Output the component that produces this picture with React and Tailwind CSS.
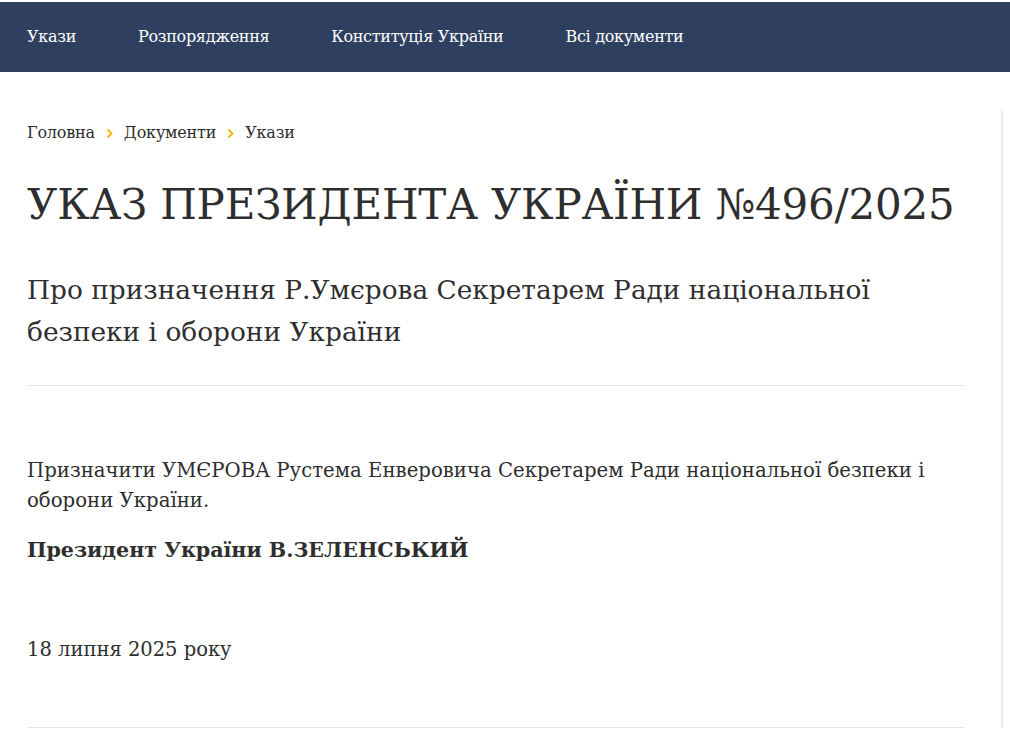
import React from "react";

function Chevron() {
    return (
        <svg className="mx-[11px]" width="7" height="11" viewBox="0 0 7 11" fill="none">
            <polyline points="1.5,1.5 5.5,5.5 1.5,9.5" stroke="#f5b400" strokeWidth="1.8" />
        </svg>
    );
}

export default function App() {
    const nav = ["Укази", "Розпорядження", "Конституція України", "Всі документи"];
    return (
        <div className="min-h-[731px] bg-white text-[#2e2e2e] font-['DejaVu_Serif',serif]">
            <div className="pt-[2px]">
                <nav className="h-[70px] bg-[#2f3f5f] flex items-center pl-[27px] gap-[62px]">
                    {nav.map((n) => (
                        <a key={n} className="text-white text-[16px] tracking-[-0.3px]">{n}</a>
                    ))}
                </nav>
            </div>
            <div className="flex">
                <main className="w-[965px] shrink-0 pl-[27px] pt-[49px]">
                    <div className="flex items-center text-[16px] leading-[24px] tracking-[-0.2px]">
                        <span>Головна</span>
                        <Chevron />
                        <span>Документи</span>
                        <Chevron />
                        <span>Укази</span>
                    </div>
                    <h1 className="text-[42px] leading-[56px] mt-[32px] tracking-[-0.2px] whitespace-nowrap">
                        УКАЗ ПРЕЗИДЕНТА УКРАЇНИ №496/2025
                    </h1>
                    <h2 className="text-[26.4px] leading-[42px] mt-[36px]">
                        Про призначення Р.Умєрова Секретарем Ради національної безпеки і оборони України
                    </h2>
                    <hr className="border-[#e6e6e6] mt-[32px]" />
                    <div className="pt-[70px] text-[19.7px] leading-[30px]">
                        <p>Призначити УМЄРОВА Рустема Енверовича Секретарем Ради національної безпеки і оборони України.</p>
                        <p className="font-bold text-[20.6px] mt-[19px]">Президент України В.ЗЕЛЕНСЬКИЙ</p>
                        <p className="mt-[70px] text-[19.5px]">18 липня 2025 року</p>
                    </div>
                    <hr className="border-[#e6e6e6] mt-[62px]" />
                </main>
                <div className="w-[36px] shrink-0" />
                <div className="mt-[38px] border-l-2 border-[#ececec] flex-1" />
            </div>
        </div>
    );
}
